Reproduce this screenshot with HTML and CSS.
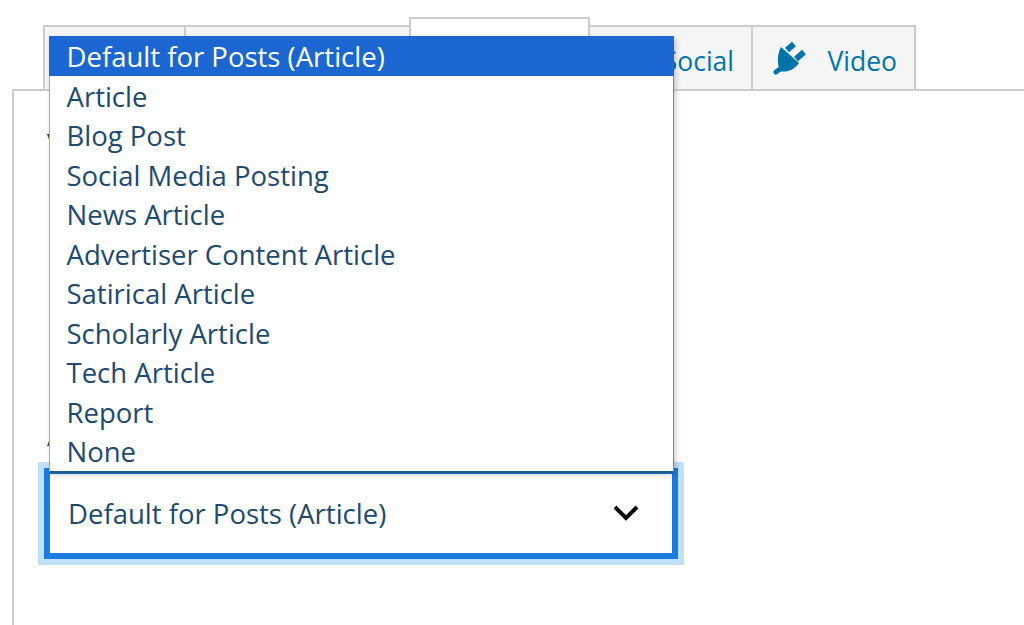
FILE: index.html
```html
<!DOCTYPE html>
<html lang="en">
<head>
<meta charset="utf-8">
<title>Schema settings</title>
<link rel="stylesheet" href="styles.css">
</head>
<body>
<div class="page">
  <div class="tabs">
    <div class="tab tab-a"></div>
    <div class="tab tab-b"></div>
    <div class="tab tab-c active"></div>
    <div class="tab tab-d"><span class="tab-label">Social</span></div>
    <div class="tab tab-e">
      <svg class="plug" viewBox="0 0 34 34" aria-hidden="true">
        <path d="M8 6 L26 22 C21 29 13 32 7 30 C4 23 4 13 8 6 Z" fill="#0073aa"/>
        <path d="M10 26 L3 31" fill="none" stroke="#0073aa" stroke-width="5" stroke-linecap="round"/>
        <path d="M14 9 L21 3 M23 18 L31 11" fill="none" stroke="#0073aa" stroke-width="6"/>
      </svg>
      <span class="tab-label">Video</span>
    </div>
  </div>
  <div class="panel">
    <div class="label label-top">V</div>
    <div class="label label-bottom">A</div>
    <div class="select">
      <span>Default for Posts (Article)</span>
      <svg class="chevron" viewBox="0 0 28 18" aria-hidden="true">
        <path d="M3 3 L14 14 L25 3" fill="none" stroke="#000" stroke-width="4"/>
      </svg>
    </div>
  </div>
  <ul class="menu">
    <li class="selected">Default for Posts (Article)</li>
    <li>Article</li>
    <li>Blog Post</li>
    <li>Social Media Posting</li>
    <li>News Article</li>
    <li>Advertiser Content Article</li>
    <li>Satirical Article</li>
    <li>Scholarly Article</li>
    <li>Tech Article</li>
    <li>Report</li>
    <li>None</li>
  </ul>
</div>
</body>
</html>
```
FILE: styles.css
```css
* { box-sizing: border-box; }
html, body { margin: 0; height: 100%; background: #fff; overflow: hidden; }
body { font-family: "Open Sans", "Noto Sans", sans-serif; }
.page { position: relative; width: 1024px; height: 625px; overflow: hidden; padding-top: 17px; }
.tabs { display: flex; align-items: flex-end; height: 72px; margin-left: 43px; }
.tab { height: 64px; background: #f5f5f5; border: 2px solid #ccc; border-bottom: 0; margin-right: -2px; display: flex; align-items: center; justify-content: flex-end; font-size: 26.5px; color: #0073aa; }
.tab-a { width: 143px; }
.tab-b { width: 227px; }
.tab-c { width: 181px; }
.tab-d { width: 165px; padding-right: 17px; }
.tab-e { width: 165px; padding-right: 17px; margin-right: 0; justify-content: space-between; padding-left: 20px; }
.tab.active { height: 72px; background: #fff; position: relative; z-index: 1; }
.tab-label { position: relative; top: 3px; }
.plug { width: 34px; height: 34px; }
.panel { margin-left: 12px; height: 561px; border-top: 2px solid #ccc; border-left: 2px solid #ccc; padding: 0 0 0 24px; background: #fff; }
.label { font-size: 26px; color: #32373c; line-height: 36px; height: 36px; margin-left: 9px; }
.label-top { margin-top: 33px; }
.label-bottom { margin-top: 258px; }
.select { width: 646px; height: 103px; margin-top: 8px; border: 6px solid #bfe0fb; background: #fff; display: flex; align-items: center; justify-content: space-between; padding: 0 38px 0 24px; font-size: 27.5px; color: #1d4a6e; box-shadow: inset 0 0 0 6px #1a7be0; }
.select span { position: relative; top: 0; }
.chevron { width: 28px; height: 18px; position: relative; top: -1px; }
.menu { position: absolute; z-index: 2; left: 49px; top: 36px; width: 625px; height: 437px; margin: 0; padding: 0; list-style: none; background: #fff; border-left: 1px solid #aaa; border-right: 1px solid #888; border-bottom: 2px solid #1d5a85; box-shadow: 2px 2px 5px rgba(0,0,0,.2); font-size: 27.5px; color: #1d4a6e; line-height: 39.5px; }
.menu li { padding: 1px 0 0 16.5px; height: 39.5px; white-space: nowrap; }
.menu li.selected { background: #1b66d1; color: #fff; margin-left: -1px; margin-right: -1px; padding-left: 17.5px; }
```
